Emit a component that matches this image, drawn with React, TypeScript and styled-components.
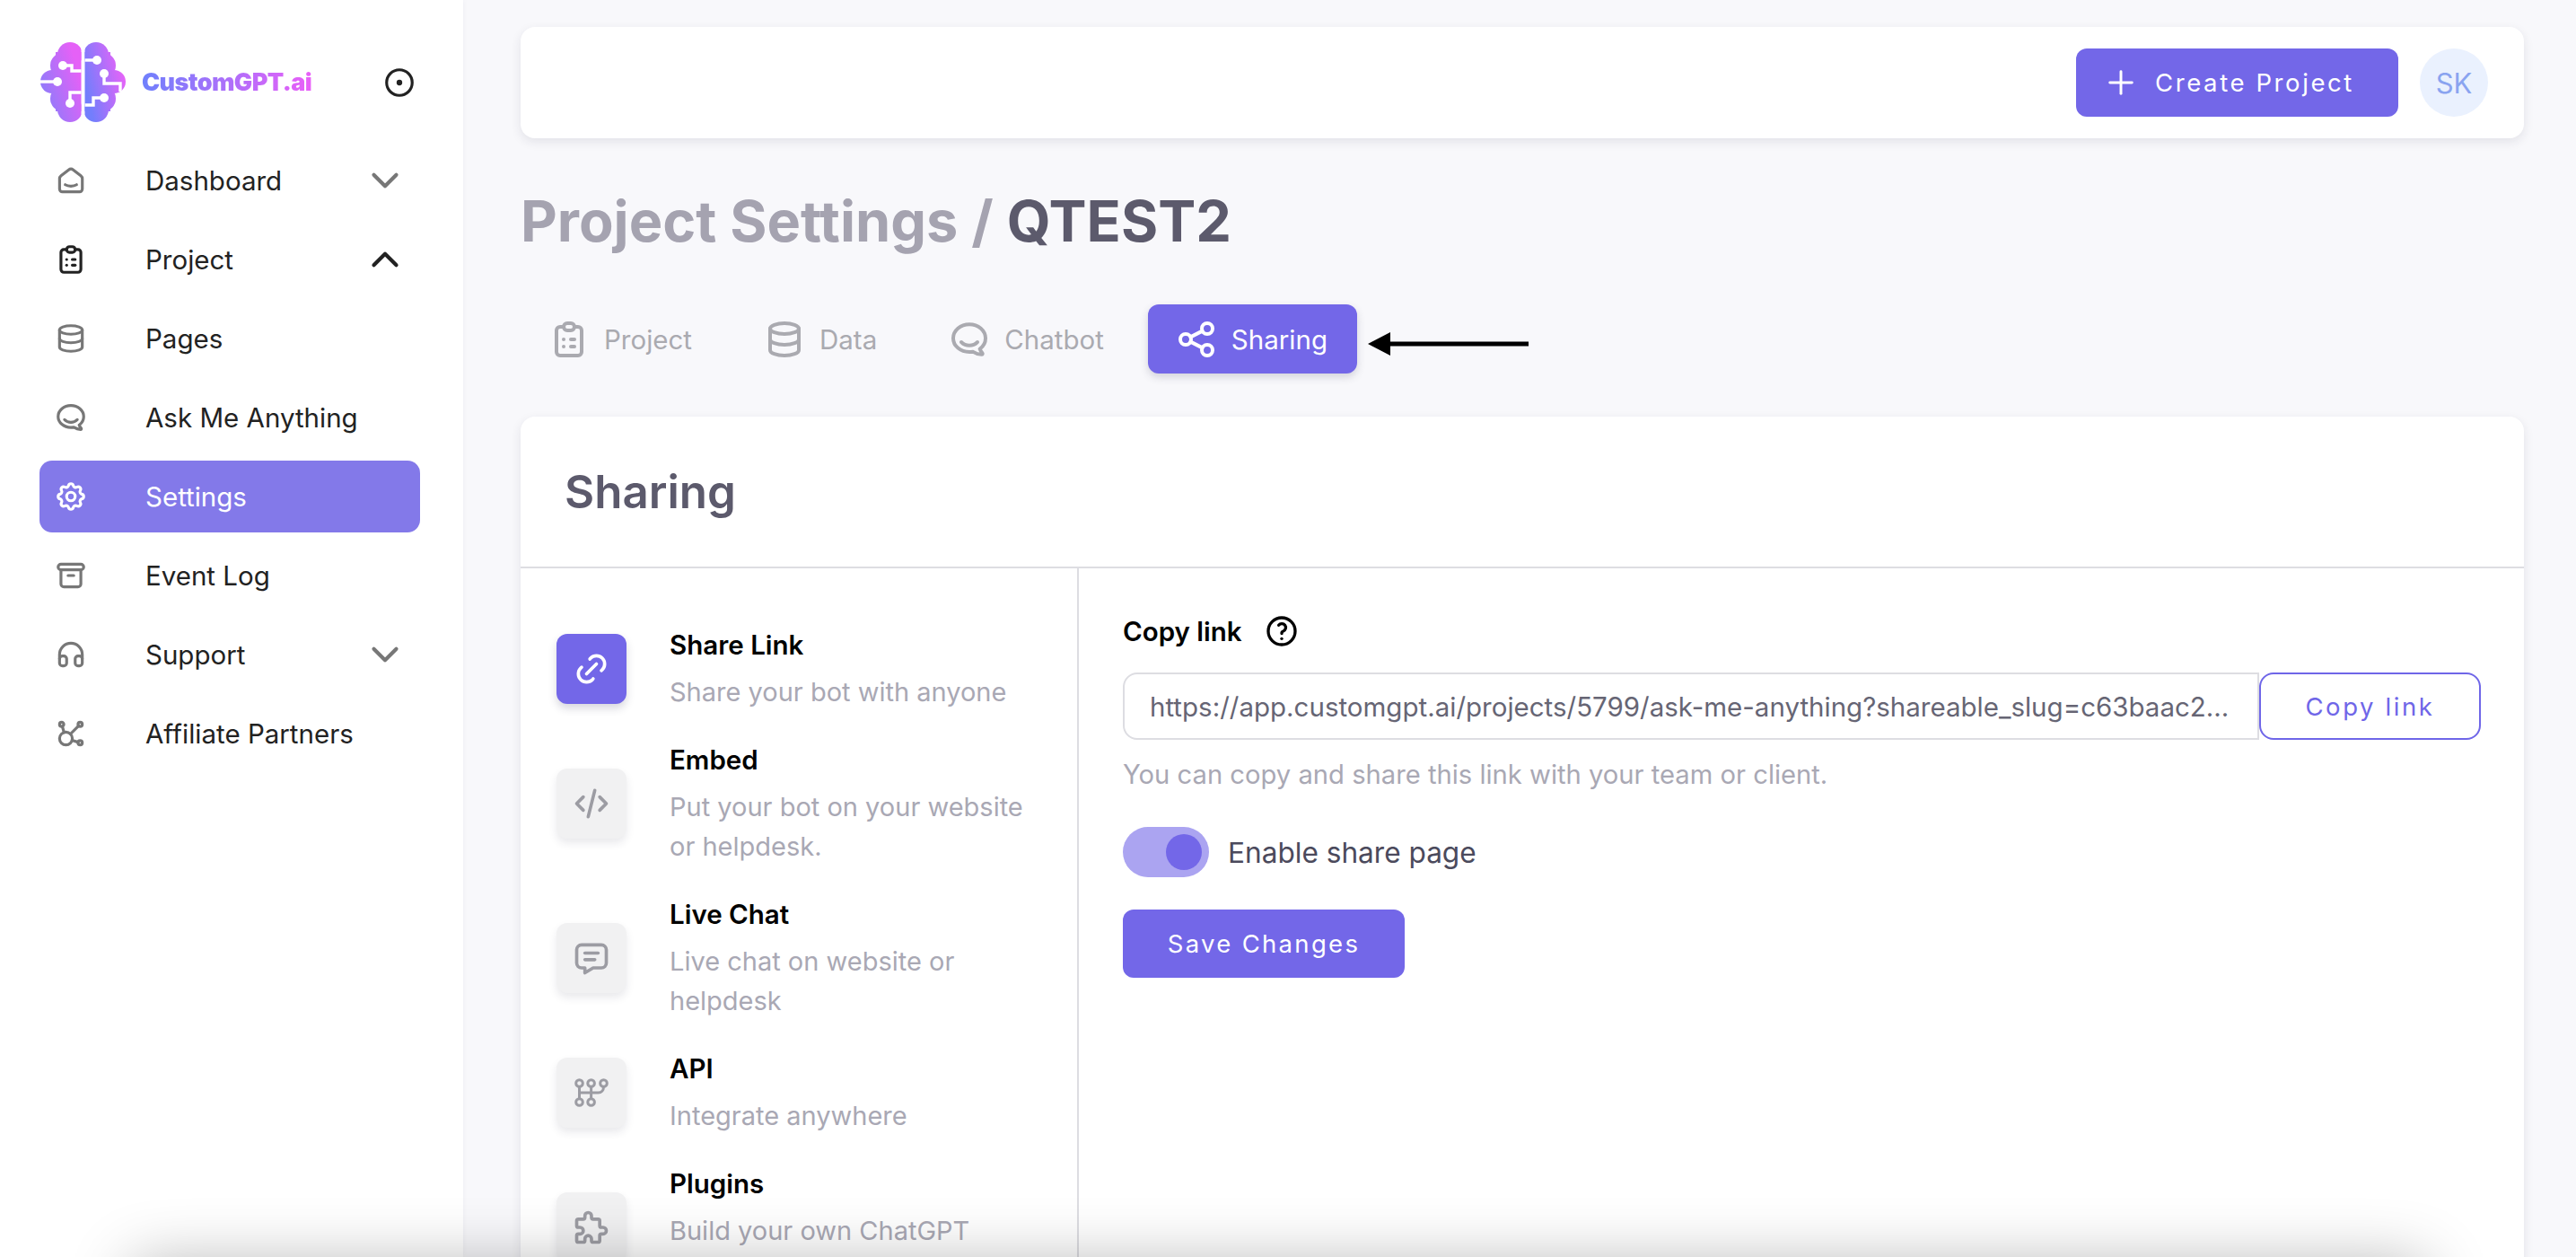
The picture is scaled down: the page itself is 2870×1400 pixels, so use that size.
import React from 'react';
import styled, { createGlobalStyle } from 'styled-components';
import {
  TbAffiliate,
  TbArchive,
  TbBrandHipchat,
  TbChevronDown,
  TbChevronUp,
  TbCircleDot,
  TbClipboardList,
  TbCode,
  TbDatabase,
  TbHeadphones,
  TbHelp,
  TbLink,
  TbMessage,
  TbPlus,
  TbPuzzle,
  TbSettings,
  TbShare,
  TbSmartHome,
} from 'react-icons/tb';

const PRIMARY = '#7367e8';

const GlobalStyle = createGlobalStyle`
  html, body {
    margin: 0;
    padding: 0;
    background: #f8f8fb;
  }
  * {
    box-sizing: border-box;
  }
`;

const navItems = [
  { label: 'Dashboard', icon: TbSmartHome, chevron: 'down' },
  { label: 'Project', icon: TbClipboardList, chevron: 'up', open: true },
  { label: 'Pages', icon: TbDatabase },
  { label: 'Ask Me Anything', icon: TbBrandHipchat },
  { label: 'Settings', icon: TbSettings, active: true },
  { label: 'Event Log', icon: TbArchive },
  { label: 'Support', icon: TbHeadphones, chevron: 'down' },
  { label: 'Affiliate Partners', icon: TbAffiliate },
];

const tabs = [
  { label: 'Project', icon: TbClipboardList },
  { label: 'Data', icon: TbDatabase },
  { label: 'Chatbot', icon: TbBrandHipchat },
  { label: 'Sharing', icon: TbShare, active: true },
];

function ApiIcon() {
  return (
    <svg width="38" height="32" viewBox="0 0 38 32" fill="none" stroke="currentColor" strokeWidth="3" strokeLinecap="round">
      <circle cx="5.5" cy="5.5" r="3.8" />
      <circle cx="18.6" cy="5.5" r="3.8" />
      <circle cx="32.5" cy="5.5" r="3.8" />
      <circle cx="5.5" cy="26.5" r="3.8" />
      <circle cx="18.6" cy="26.5" r="3.8" />
      <path d="M5.5 9.5V22.5M18.6 9.5V22.5M5.5 16H26.5C30 16 32.5 13.5 32.5 9.5" />
    </svg>
  );
}

const shareOptions = [
  { title: 'Share Link', text: 'Share your bot with anyone', icon: <TbLink size={44} />, active: true },
  { title: 'Embed', text: 'Put your bot on your website or helpdesk.', icon: <TbCode size={44} /> },
  { title: 'Live Chat', text: 'Live chat on website or helpdesk', icon: <TbMessage size={44} /> },
  { title: 'API', text: 'Integrate anywhere', icon: <ApiIcon /> },
  { title: 'Plugins', text: 'Build your own ChatGPT', icon: <TbPuzzle size={44} />, low: true },
];

function BrainLogo() {
  return (
    <svg width="95" height="89" viewBox="45 47 95 89">
      <defs>
        <linearGradient id="leftLobe" gradientUnits="userSpaceOnUse" x1="45" y1="100" x2="90" y2="85">
          <stop offset="0" stopColor="#8f7bfa" />
          <stop offset="1" stopColor="#e561f7" />
        </linearGradient>
        <linearGradient id="rightLobe" gradientUnits="userSpaceOnUse" x1="95" y1="95" x2="140" y2="85">
          <stop offset="0" stopColor="#737efc" />
          <stop offset="1" stopColor="#e863f8" />
        </linearGradient>
        <clipPath id="leftClip">
          <rect x="45" y="47" width="45.5" height="89" />
        </clipPath>
        <clipPath id="rightClip">
          <rect x="94.5" y="47" width="45.5" height="89" />
        </clipPath>
      </defs>
      <g fill="url(#leftLobe)" clipPath="url(#leftClip)">
        <circle cx="78" cy="61" r="14" />
        <circle cx="70" cy="73" r="14" />
        <circle cx="58" cy="91" r="13" />
        <circle cx="70" cy="110" r="14" />
        <circle cx="78" cy="122" r="14" />
        <rect x="62" y="58" width="30" height="66" />
      </g>
      <g fill="url(#rightLobe)" clipPath="url(#rightClip)">
        <circle cx="107" cy="61" r="14" />
        <circle cx="115" cy="73" r="14" />
        <circle cx="127" cy="91" r="13" />
        <circle cx="115" cy="110" r="14" />
        <circle cx="107" cy="122" r="14" />
        <rect x="93" y="58" width="30" height="66" />
      </g>
      <g fill="none" stroke="#fff" strokeWidth="3.4">
        <path d="M70 73H80V79H90.5" />
        <path d="M45 91H64" />
        <path d="M78 115V103H90.5" />
        <path d="M94.5 67H108" />
        <path d="M116 82V93H134V102" />
        <path d="M116 109H104V117H94.5" />
      </g>
      <g fill="#fff">
        <circle cx="70" cy="73" r="5" />
        <circle cx="64" cy="91" r="5" />
        <circle cx="78" cy="115" r="5" />
        <circle cx="108" cy="67" r="5" />
        <circle cx="116" cy="82" r="5" />
        <circle cx="116" cy="109" r="5" />
      </g>
    </svg>
  );
}

export default function App() {
  return (
    <Page>
      <GlobalStyle />
      <Sidebar>
        <LogoRow>
          <BrainLogo />
          <LogoText>CustomGPT.ai</LogoText>
          <PinButton>
            <TbCircleDot size={38} />
          </PinButton>
        </LogoRow>
        <Nav>
          {navItems.map((item) => {
            const Icon = item.icon;
            return (
              <NavItem key={item.label} $active={item.active}>
                <NavIcon $active={item.active} $open={item.open}>
                  <Icon size={38} />
                </NavIcon>
                <NavLabel>{item.label}</NavLabel>
                {item.chevron === 'down' && (
                  <Chevron>
                    <TbChevronDown size={50} />
                  </Chevron>
                )}
                {item.chevron === 'up' && (
                  <Chevron $open>
                    <TbChevronUp size={50} />
                  </Chevron>
                )}
              </NavItem>
            );
          })}
        </Nav>
      </Sidebar>

      <Main>
        <TopBar>
          <CreateButton>
            <TbPlus size={42} strokeWidth={1.7} />
            Create Project
          </CreateButton>
          <Avatar>SK</Avatar>
        </TopBar>

        <PageTitle>
          Project Settings / <strong>QTEST2</strong>
        </PageTitle>

        <TabRow>
          {tabs.map((tab) => {
            const Icon = tab.icon;
            return (
              <Tab key={tab.label} $active={tab.active}>
                <Icon size={48} />
                {tab.label}
              </Tab>
            );
          })}
          <Arrow width="179" height="26" viewBox="0 0 179 26">
            <path d="M0 13L25 0V10.5H179V15.5H25V26Z" fill="#000" />
          </Arrow>
        </TabRow>

        <Card>
          <CardHeader>Sharing</CardHeader>
          <CardBody>
            <OptionList>
              {shareOptions.map((opt) => (
                <Option key={opt.title}>
                  <OptionIcon $active={opt.active} $low={opt.low}>
                    {opt.icon}
                  </OptionIcon>
                  <OptionText>
                    <OptionTitle>{opt.title}</OptionTitle>
                    <OptionDesc>{opt.text}</OptionDesc>
                  </OptionText>
                </Option>
              ))}
            </OptionList>

            <Panel>
              <FieldLabel>
                Copy link
                <TbHelp size={40} color="#000" />
              </FieldLabel>
              <InputRow>
                <LinkInput
                  readOnly
                  value="https://app.customgpt.ai/projects/5799/ask-me-anything?shareable_slug=c63baac2..."
                />
                <CopyButton>Copy link</CopyButton>
              </InputRow>
              <Hint>You can copy and share this link with your team or client.</Hint>
              <ToggleRow>
                <Toggle>
                  <Knob />
                </Toggle>
                Enable share page
              </ToggleRow>
              <SaveButton>Save Changes</SaveButton>
            </Panel>
          </CardBody>
        </Card>
      </Main>
      <BottomShade />
    </Page>
  );
}

const Page = styled.div`
  position: relative;
  display: flex;
  width: 2870px;
  height: 1400px;
  overflow: hidden;
  background: #f8f8fb;
  font-family: Inter, 'Liberation Sans', sans-serif;
`;
const Sidebar = styled.aside`
  flex: 0 0 516px;
  padding-top: 47px;
  background: #fff;
  box-shadow: 0 0 6px rgba(40, 40, 70, 0.05);
`;
const LogoRow = styled.div`
  display: flex;
  align-items: center;
  height: 89px;
  margin: 0 0 25px 45px;
`;
const LogoText = styled.span`
  margin: 0 0 0 18px;
  font-size: 27px;
  font-weight: 900;
  letter-spacing: -0.6px;
  background: linear-gradient(90deg, #6f80fc, #e95ff8);
  -webkit-background-clip: text;
  background-clip: text;
  color: transparent;
`;
const PinButton = styled.span`
  display: flex;
  margin-left: 79px;
  color: #222;
`;
const Nav = styled.nav`
  display: flex;
  flex-direction: column;
  gap: 8px;
  width: 424px;
  margin-left: 44px;
`;
const NavItem = styled.div`
  display: flex;
  align-items: center;
  height: 80px;
  padding: 0 14px 0 16px;
  border-radius: 14px;
  background: ${(p) => (p.$active ? '#8379e9' : 'transparent')};
  color: ${(p) => (p.$active ? '#fff' : '#222')};
`;
const NavIcon = styled.span`
  display: flex;
  color: ${(p) => (p.$active ? '#fff' : p.$open ? '#222' : '#777')};
`;
const NavLabel = styled.span`
  flex: 1;
  margin-left: 64px;
  font-size: 29.5px;
`;
const Chevron = styled.span`
  display: flex;
  color: ${(p) => (p.$open ? '#222' : '#777')};
`;
const Main = styled.main`
  flex: 1;
  min-width: 0;
  padding: 30px 58px 0 64px;
`;
const TopBar = styled.header`
  display: flex;
  align-items: center;
  justify-content: flex-end;
  gap: 24px;
  height: 124px;
  padding-right: 40px;
  border-radius: 16px;
  background: #fff;
  box-shadow: 0 4px 12px rgba(40, 40, 70, 0.1);
`;
const CreateButton = styled.button`
  display: flex;
  align-items: center;
  gap: 17px;
  width: 359px;
  height: 76px;
  padding: 0 0 0 29px;
  border: none;
  border-radius: 12px;
  background: ${PRIMARY};
  color: #fff;
  font-family: inherit;
  font-size: 27.5px;
  letter-spacing: 2.6px;
`;
const Avatar = styled.div`
  display: flex;
  align-items: center;
  justify-content: center;
  width: 76px;
  height: 76px;
  border-radius: 50%;
  background: #eaf1fe;
  color: #8aa4f0;
  font-size: 31px;
`;
const PageTitle = styled.h1`
  margin: 56px 0 57px;
  font-size: 63px;
  line-height: 72px;
  font-weight: 700;
  color: #a5a3b0;
  strong {
    color: #5c5a6c;
    font-weight: 700;
  }
`;
const TabRow = styled.div`
  display: flex;
  gap: 16px;
`;
const Tab = styled.div`
  display: flex;
  align-items: center;
  gap: 15px;
  height: 77px;
  padding: 0 33px 0 30px;
  border-radius: 12px;
  background: ${(p) => (p.$active ? PRIMARY : 'transparent')};
  box-shadow: ${(p) => (p.$active ? '0 4px 10px rgba(60, 60, 90, 0.2)' : 'none')};
  color: ${(p) => (p.$active ? '#fff' : '#aaaab0')};
  font-size: 29.5px;
`;
const Arrow = styled.svg`
  align-self: flex-start;
  margin: 31px 0 0 -4px;
`;
const Card = styled.section`
  margin-top: 48px;
  border-radius: 16px 16px 0 0;
  background: #fff;
  box-shadow: 0 4px 12px rgba(40, 40, 70, 0.1);
`;
const CardHeader = styled.h2`
  display: flex;
  align-items: center;
  height: 169px;
  margin: 0;
  padding-left: 49px;
  border-bottom: 2px solid #dddde2;
  color: #5c5a6c;
  font-size: 51px;
  font-weight: 600;
`;
const CardBody = styled.div`
  display: flex;
  height: 800px;
`;
const OptionList = styled.div`
  display: flex;
  flex-direction: column;
  gap: 31px;
  flex: 0 0 622px;
  padding: 63px 0 0 40px;
  border-right: 2px solid #dddde2;
`;
const Option = styled.div`
  display: flex;
  align-items: center;
  gap: 48px;
`;
const OptionIcon = styled.div`
  display: flex;
  align-items: center;
  justify-content: center;
  flex: 0 0 78px;
  height: 78px;
  border-radius: 12px;
  align-self: ${(p) => (p.$low ? 'flex-start' : 'center')};
  margin-top: ${(p) => (p.$low ? '32px' : '0')};
  background: ${(p) => (p.$active ? PRIMARY : '#f1f1f2')};
  box-shadow: 0 5px 10px rgba(40, 40, 70, ${(p) => (p.$active ? 0.18 : 0.1)});
  color: ${(p) => (p.$active ? '#fff' : '#9c9ca3')};
`;
const OptionText = styled.div`
  display: flex;
  flex-direction: column;
  align-self: flex-start;
  gap: 9px;
  max-width: 430px;
`;
const OptionTitle = styled.div`
  color: #000;
  font-size: 29.5px;
  font-weight: 600;
  line-height: 44px;
`;
const OptionDesc = styled.div`
  color: #a9a8b4;
  font-size: 29px;
  line-height: 44px;
`;
const Panel = styled.div`
  flex: 1;
  min-width: 0;
  padding: 48px 48px 0 49px;
`;
const FieldLabel = styled.div`
  display: flex;
  align-items: center;
  gap: 24px;
  height: 44px;
  color: #000;
  font-size: 29.5px;
  font-weight: 600;
`;
const InputRow = styled.div`
  display: flex;
  height: 75px;
  margin-top: 24px;
`;
const LinkInput = styled.input`
  flex: 1;
  min-width: 0;
  padding: 0 28px;
  border: 2px solid #dddde2;
  border-radius: 16px 0 0 16px;
  outline: none;
  color: #666574;
  font-family: inherit;
  font-size: 29.5px;
  text-overflow: ellipsis;
`;
const CopyButton = styled.button`
  flex: 0 0 247px;
  border: 2px solid #6f66e8;
  border-radius: 16px;
  background: #fff;
  color: #6f66e8;
  font-family: inherit;
  font-size: 27.5px;
  letter-spacing: 2.6px;
`;
const Hint = styled.div`
  margin-top: 17px;
  color: #a9a8b4;
  font-size: 29.2px;
  line-height: 44px;
`;
const ToggleRow = styled.div`
  display: flex;
  align-items: center;
  gap: 21px;
  margin-top: 36px;
  color: #4b4a5c;
  font-size: 31.6px;
`;
const Toggle = styled.div`
  display: flex;
  align-items: center;
  justify-content: flex-end;
  width: 96px;
  height: 56px;
  padding-right: 8px;
  border-radius: 28px;
  background: #aba4f1;
`;
const Knob = styled.div`
  width: 40px;
  height: 40px;
  border-radius: 50%;
  background: ${PRIMARY};
`;
const SaveButton = styled.button`
  display: block;
  width: 314px;
  height: 76px;
  margin-top: 36px;
  border: none;
  border-radius: 12px;
  background: ${PRIMARY};
  color: #fff;
  font-family: inherit;
  font-size: 27.5px;
  letter-spacing: 2.3px;
`;
const BottomShade = styled.div`
  position: absolute;
  left: 180px;
  right: 200px;
  top: 1440px;
  height: 100px;
  box-shadow: 0 0 70px 32px rgba(0, 0, 0, 0.3);
  pointer-events: none;
`;
